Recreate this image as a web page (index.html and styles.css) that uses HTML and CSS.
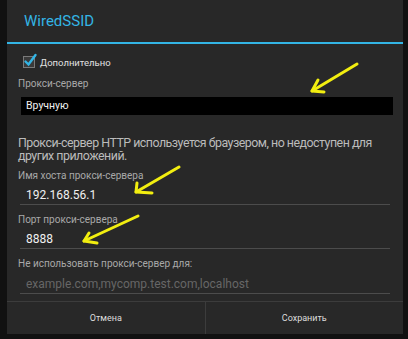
FILE: index.html
```html
<!DOCTYPE html>
<html lang="ru">
<head>
<meta charset="utf-8">
<title>WiredSSID</title>
<link rel="stylesheet" href="styles.css">
</head>
<body>

<div class="dialog">
	<div class="dialog_title">WiredSSID</div>

	<div class="dialog_body">
		<div class="check_row">
			<svg class="checkbox" width="16" height="16" viewBox="0 0 16 16">
				<rect x="1.5" y="3.5" width="11" height="11" fill="#3a3a3a" stroke="#7a7a7a"/>
				<path d="M3.5 8.5 L6.5 11.5 L13.5 2" fill="none" stroke="#33b5e5" stroke-width="2.4" stroke-linecap="round"/>
			</svg>
			<span>Дополнительно</span>
		</div>

		<div class="field_label">Прокси-сервер</div>
		<div class="spinner">Вручную</div>

		<p class="description">Прокси-сервер HTTP используется браузером, но недоступен для других приложений.</p>

		<div class="field_label">Имя хоста прокси-сервера</div>
		<div class="text_input">192.168.56.1</div>

		<div class="field_label">Порт прокси-сервера</div>
		<div class="text_input">8888</div>

		<div class="field_label">Не использовать прокси-сервер для:</div>
		<div class="text_input placeholder">example.com,mycomp.test.com,localhost</div>
	</div>

	<div class="dialog_buttons">
		<button>Отмена</button>
		<button>Сохранить</button>
	</div>
</div>

<!-- hand-drawn arrows on top of the screenshot -->
<svg class="arrows" width="408" height="339" viewBox="0 0 408 339">
	<g fill="none" stroke="#f2ee10" stroke-width="3" stroke-linecap="round" stroke-linejoin="round">
		<path d="M357 64 L312 91"/>
		<path d="M318 80 L312 91 L324 92"/>
		<path d="M179 167 L136 192"/>
		<path d="M137 183 L136 192 L152 193"/>
		<path d="M138 216 L84 241"/>
		<path d="M89 233 L84 241 L97 243"/>
	</g>
</svg>

</body>
</html>
```

FILE: styles.css
```css
html {
background: #111111;
}

body {
margin: 0;
font-family: Roboto, "Liberation Sans", sans-serif;
color: #dddddd;
}

.dialog {
margin-left: 7px;
width: 396px;
height: 334px;
background-color: #282828;
display: flex;
flex-direction: column;
}

.dialog_title {
height: 42px;
border-bottom: 2px solid #33b5e5;
display: flex;
align-items: center;
padding-left: 17px;
font-size: 15px;
color: #33b5e5;
}

.dialog_body {
flex: 1;
padding: 0 8px 0 11px;
}

/* checkbox row */

.check_row {
margin-top: 6px;
height: 24px;
display: flex;
align-items: center;
padding-left: 4px;
font-size: 9.5px;
color: #e0e0e0;
}

.checkbox {
margin-right: 2px;
margin-top: -2px;
}

.field_label {
height: 14px;
line-height: 14px;
font-size: 10px;
color: #a8a8a8;
margin-top: 7px;
}

.check_row + .field_label {
margin-top: 3px;
}

.spinner {
margin: 6px 2px 0 3px;
height: 18px;
line-height: 18px;
background: #000000;
padding-left: 5px;
font-size: 10.5px;
color: #f0f0f0;
}

.description {
margin: 21px 0 0 0;
font-size: 12.4px;
letter-spacing: -0.5px;
line-height: 13px;
color: #bbbbbb;
}

.description + .field_label {
margin-top: 7px;
}

.text_input {
margin: 0 5px 0 2px;
padding: 3px 0 0 6px;
height: 18px;
line-height: 18px;
font-size: 12px;
color: #f0f0f0;
border-bottom: 1px solid #4c4c4c;
}

.text_input + .field_label {
margin-top: 8px;
}

.placeholder {
padding-top: 4px;
color: #666666;
}

/* bottom button bar */

.dialog_buttons {
height: 32px;
border-top: 1px solid #3c3c3c;
display: flex;
}

.dialog_buttons > button {
flex: 1;
background: none;
border: none;
font-family: inherit;
font-size: 9px;
color: #dddddd;
padding: 0;
}

.dialog_buttons > button + button {
border-left: 1px solid #3c3c3c;
}

.arrows {
position: absolute;
left: 0;
top: 0;
}
```
